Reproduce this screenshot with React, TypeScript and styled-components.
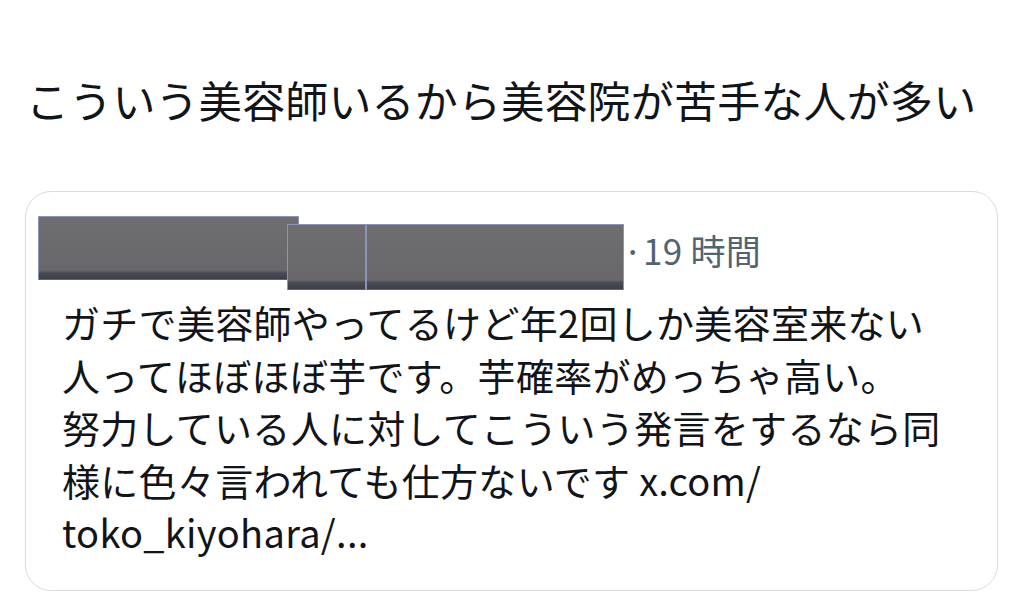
import React from "react";
import styled, { createGlobalStyle } from "styled-components";

const GlobalStyle = createGlobalStyle`
  html, body {
    margin: 0;
    padding: 0;
    background: #ffffff;
  }
  body {
    font-family: "Noto Sans CJK JP", "Noto Sans", sans-serif;
    color: #0f1419;
  }
`;

const Page = styled.main`
  width: 1024px;
  height: 598px;
  box-sizing: border-box;
  padding: 71px 26px 0 25px;
  overflow: hidden;
`;

const Headline = styled.p`
  margin: 0 0 0 1px;
  font-size: 43px;
  line-height: 56px;
  letter-spacing: 0.2px;
  color: #111418;
`;

const QuoteCard = styled.section`
  margin-top: 64px;
  height: 400px;
  box-sizing: border-box;
  border: 1.5px solid #d7dde1;
  border-radius: 26px;
  padding: 24px 12px 0 12px;
`;

const HeaderRow = styled.div`
  display: flex;
  align-items: flex-start;
`;

const Redaction = styled.div<{ $w: number; $h: number; $top?: number; $overlap?: number }>`
  flex: none;
  width: ${(p) => p.$w}px;
  height: ${(p) => p.$h}px;
  margin-top: ${(p) => p.$top ?? 0}px;
  margin-left: ${(p) => -(p.$overlap ?? 0)}px;
  box-sizing: border-box;
  background: linear-gradient(#6e6e70, #68686a 86%, #4a4b52 90%, #3c3e4c);
  border: 1px solid #8c93b8;
  border-bottom-color: #5d6179;
  border-radius: 1px;
`;

const Meta = styled.span`
  margin: 12px 0 0 -1px;
  font-size: 35px;
  line-height: 44px;
  letter-spacing: 0.3px;
  color: #536471;
  white-space: nowrap;
`;

const Body = styled.p`
  margin: 6px 0 0 24px;
  font-size: 38px;
  line-height: 52.5px;
  letter-spacing: 0.3px;
  color: #111418;
`;

export default function App() {
  return (
    <>
      <GlobalStyle />
      <Page>
        <Headline>こういう美容師いるから美容院が苦手な人が多い</Headline>
        <QuoteCard>
          <HeaderRow>
            <Redaction $w={261} $h={64} />
            <Redaction $w={79} $h={66} $top={8} $overlap={12} />
            <Redaction $w={258} $h={66} $top={8} />
            <Meta>·19 時間</Meta>
          </HeaderRow>
          <Body>
            ガチで美容師やってるけど年2回しか美容室来ない
            <br />
            人ってほぼほぼ芋です。芋確率がめっちゃ高い。
            <br />
            努力している人に対してこういう発言をするなら同
            <br />
            様に色々言われても仕方ないです x.com/
            <br />
            toko_kiyohara/...
          </Body>
        </QuoteCard>
      </Page>
    </>
  );
}
